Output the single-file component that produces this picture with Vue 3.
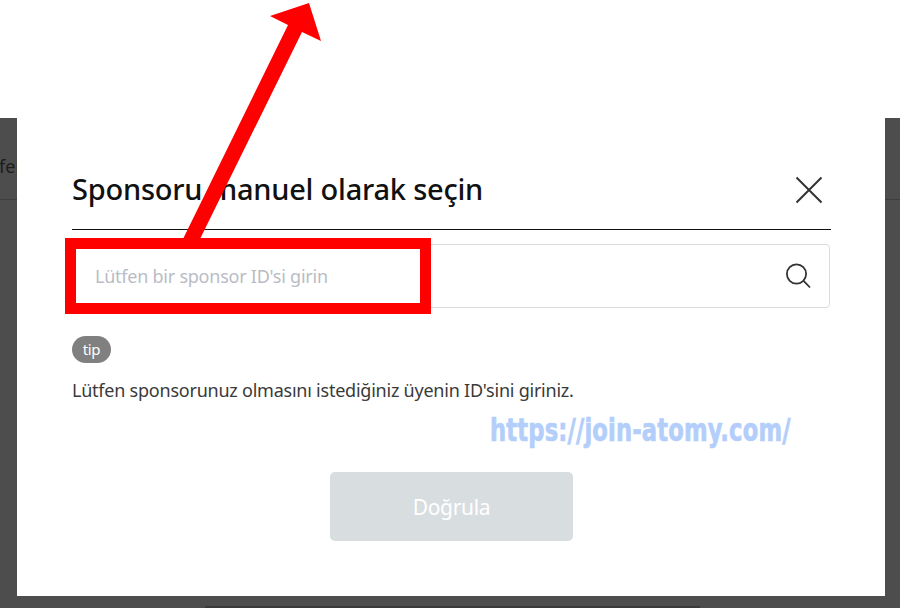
<template>
  <div class="page">
    <div class="top-gap"></div>
    <div class="backdrop">
      <div class="under-header"><span class="under-text">Lütfen</span></div>
      <div class="under-line"></div>
      <section class="modal">
        <header class="modal-head">
          <h2 class="title">Sponsoru manuel olarak seçin</h2>
          <svg class="close" width="28" height="28" viewBox="0 0 28 28" aria-label="Kapat">
            <path d="M1.5 1.5 L26.5 26.5 M26.5 1.5 L1.5 26.5" />
          </svg>
        </header>
        <div class="search">
          <span class="placeholder">Lütfen bir sponsor ID'si girin</span>
          <svg class="search-icon" width="28" height="28" viewBox="0 0 28 28" aria-label="Ara">
            <circle cx="11.5" cy="11" r="9.6" />
            <path d="M18.6 17.8 L25 24.5" />
          </svg>
        </div>
        <span class="tip">tip</span>
        <p class="desc">Lütfen sponsorunuz olmasını istediğiniz üyenin ID'sini giriniz.</p>
        <div class="actions">
          <button class="confirm" type="button">Doğrula</button>
        </div>
      </section>
      <div class="bottom-shadow"></div>
    </div>

    <div class="red-box"></div>
    <svg class="arrow" width="900" height="250" viewBox="0 0 900 250">
      <polygon points="183,239 288,25 270,16 309,3 321,41 302,32 200,239" />
    </svg>
    <div class="watermark">https://join-atomy.com/</div>
  </div>
</template>

<script setup>
</script>

<style>
html, body { margin: 0; background: #fff; }
</style>

<style scoped>
.page {
  position: relative;
  width: 900px;
  height: 608px;
  overflow: hidden;
  background: #fff;
  font-family: "Noto Sans", "Open Sans", sans-serif;
}
.top-gap { height: 118px; }
.backdrop {
  position: relative;
  height: 490px;
  background: #4d4d4d;
}
.under-header {
  height: 81px;
  display: flex;
  align-items: center;
  padding-top: 14px;
  box-sizing: border-box;
  margin-left: -28px;
}
.under-text {
  font-size: 18px;
  color: #1c1c1c;
}
.under-line { height: 1px; background: #3d3d3d; }
.modal {
  position: absolute;
  top: 0;
  left: 17px;
  width: 868px;
  height: 478px;
  box-sizing: border-box;
  background: #fff;
  padding: 0 54px 0 55px;
}
.modal-head {
  height: 112px;
  box-sizing: border-box;
  border-bottom: 1.5px solid #111;
  display: flex;
  align-items: flex-end;
  justify-content: space-between;
  padding-bottom: 19px;
}
.title {
  margin: 0;
  font-size: 29px;
  line-height: 42px;
  font-weight: 500;
  letter-spacing: -0.22px;
  color: #111;
}
.close {
  margin: 0 8px 6px 0;
  fill: none;
  stroke: #333;
  stroke-width: 2;
}
.search {
  margin-top: 14px;
  margin-right: 1px;
  height: 64px;
  box-sizing: border-box;
  border: 1px solid #dcdcdc;
  border-radius: 4px;
  display: flex;
  align-items: center;
  justify-content: space-between;
  padding: 0 16px 0 22px;
}
.placeholder {
  font-size: 18px;
  letter-spacing: -0.24px;
  color: #b9bcc4;
}
.search-icon {
  margin-top: 2px;
  fill: none;
  stroke: #333;
  stroke-width: 1.8;
}
.tip {
  display: block;
  width: 39px;
  height: 27px;
  margin-top: 28px;
  border-radius: 14px;
  background: #808080;
  color: #fff;
  font-size: 15px;
  letter-spacing: -0.3px;
  line-height: 26px;
  text-align: center;
}
.desc {
  margin: 13px 0 0;
  font-size: 18px;
  letter-spacing: -0.23px;
  line-height: 28px;
  color: #3a3a3a;
  white-space: nowrap;
}
.actions {
  display: flex;
  justify-content: center;
  margin-top: 68px;
}
.confirm {
  width: 243px;
  height: 69px;
  border: none;
  border-radius: 5px;
  background: #d8dde0;
  color: #fff;
  font: 400 21px "Noto Sans", sans-serif;
  letter-spacing: -0.3px;
}
.bottom-shadow {
  position: absolute;
  left: 205px;
  bottom: 0;
  width: 495px;
  height: 2px;
  background: #3a3a3a;
}
.red-box {
  position: absolute;
  left: 65px;
  top: 238px;
  width: 366px;
  height: 76px;
  box-sizing: border-box;
  border: 11px solid #fe0000;
}
.arrow {
  position: absolute;
  left: 0;
  top: 0;
  fill: #fe0000;
}
.watermark {
  position: absolute;
  left: 490px;
  top: 412px;
  font-family: "DejaVu Sans Condensed", "DejaVu Sans", sans-serif;
  font-stretch: condensed;
  font-weight: 700;
  font-size: 32px;
  line-height: 36px;
  letter-spacing: 0.2px;
  -webkit-text-stroke: 0.7px #b3cefa;
  color: #b3cefa;
  white-space: nowrap;
  transform: scaleX(0.787);
  transform-origin: left center;
}
</style>
